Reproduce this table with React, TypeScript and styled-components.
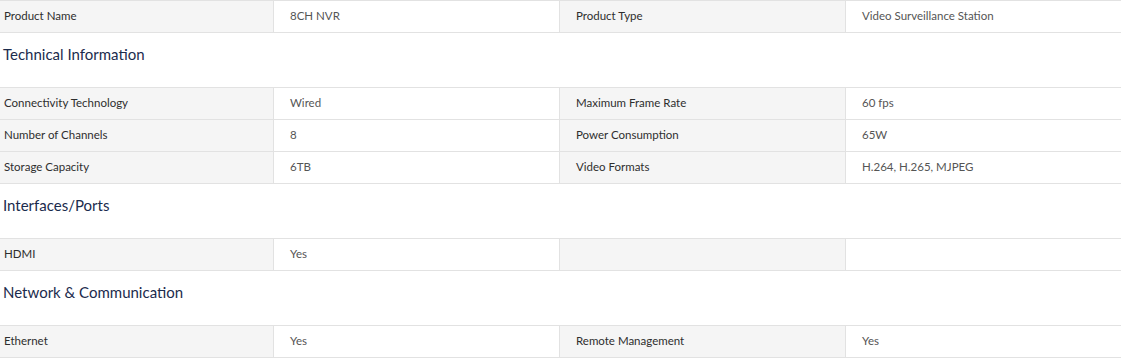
import * as React from "react";
import styled, { createGlobalStyle } from "styled-components";

type Spec = [string, string];

interface Section {
  title?: string;
  rows: Spec[][];
}

const sections: Section[] = [
  {
    rows: [[["Product Name", "8CH NVR"], ["Product Type", "Video Surveillance Station"]]],
  },
  {
    title: "Technical Information",
    rows: [
      [["Connectivity Technology", "Wired"], ["Maximum Frame Rate", "60 fps"]],
      [["Number of Channels", "8"], ["Power Consumption", "65W"]],
      [["Storage Capacity", "6TB"], ["Video Formats", "H.264, H.265, MJPEG"]],
    ],
  },
  {
    title: "Interfaces/Ports",
    rows: [[["HDMI", "Yes"], ["", ""]]],
  },
  {
    title: "Network & Communication",
    rows: [[["Ethernet", "Yes"], ["Remote Management", "Yes"]]],
  },
];

const GlobalStyle = createGlobalStyle`
  body {
    margin: 0;
    background: #fff;
    font-family: "Lato", "Open Sans", sans-serif;
  }
`;

export default function App() {
  return (
    <>
      <GlobalStyle />
      <Specs>
        {sections.map((section, i) => (
          <Group key={i}>
            {section.title && <Heading>{section.title}</Heading>}
            <Table>
              {section.rows.map((row, r) =>
                row.flatMap(([label, value], c) => [
                  <Cell key={`${r}-${c}-l`} $label $first={c === 0}>
                    {label}
                  </Cell>,
                  <Cell key={`${r}-${c}-v`} $last={c === row.length - 1}>
                    {value}
                  </Cell>,
                ])
              )}
            </Table>
          </Group>
        ))}
      </Specs>
    </>
  );
}

const Specs = styled.div`
  display: flex;
  flex-direction: column;
  width: 1121px;
`;

const Group = styled.section`
  display: flex;
  flex-direction: column;
`;

const Heading = styled.h3`
  margin: 0;
  padding: 11px 3px 22px;
  font-size: 15px;
  line-height: 21px;
  font-weight: 400;
  color: #1b2b4d;
`;

const Table = styled.div`
  display: grid;
  grid-template-columns: 274px 286px 286px 1fr;
  border-top: 1px solid #e2e2e2;
`;

const Cell = styled.div<{ $label?: boolean; $first?: boolean; $last?: boolean }>`
  display: flex;
  align-items: center;
  box-sizing: border-box;
  height: 32px;
  padding: 0 0 2px ${({ $first }) => ($first ? "4px" : "16px")};
  border-bottom: 1px solid #e2e2e2;
  border-right: ${({ $last }) => ($last ? "none" : "1px solid #e2e2e2")};
  background: ${({ $label }) => ($label ? "#f5f5f5" : "#fff")};
  color: ${({ $label }) => ($label ? "#2e2e2e" : "#555")};
  font-size: 11.5px;
  white-space: nowrap;
`;
